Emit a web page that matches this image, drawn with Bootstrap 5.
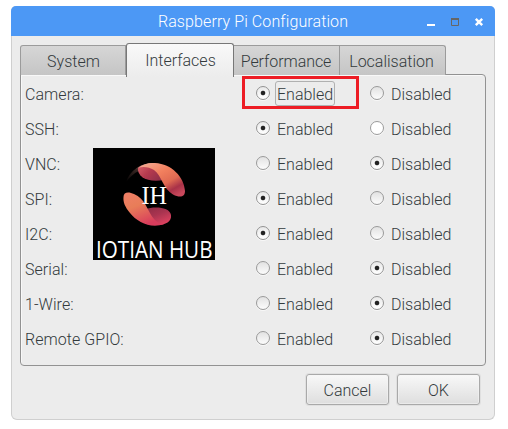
<!DOCTYPE html>
<html lang="en">
<head>
<meta charset="utf-8">
<title>Raspberry Pi Configuration</title>
<link href="https://cdn.jsdelivr.net/npm/bootstrap@5.3.0/dist/css/bootstrap.min.css" rel="stylesheet">
<style>
body{background:#fff;font-family:Roboto,"Liberation Sans",sans-serif;font-weight:300;font-size:16px;line-height:20px;color:#333a3c;overflow:hidden}
.win{width:484px;height:414px;margin:6px 0 0 11px;background:#ececec;border:1px solid #cfcfcf;border-top:0;border-bottom-width:1px;border-radius:5px 5px 6px 6px}
.titlebar{height:30px;margin:0 -1px;background:#4c98f5;color:#fff;border-radius:5px 5px 0 0}
.titletext{padding-top:2px;letter-spacing:.1px}
.winctl{right:11px;top:9px}
.tabs{height:32px;margin:7px 0 0 8px;z-index:1}
.tabs .nav-link{height:30px;padding:3px 0 0;color:#333a3c;background:linear-gradient(#d6d6d6,#c5c5c5);border:1px solid #9b9b9b;border-left-width:0;border-bottom:0;border-radius:0;margin:2px 0 0}
.tabs .nav-link.first{width:106px;padding-left:1px;border-left-width:1px;border-top-left-radius:3px}
.tabs .nav-link.active{width:108px;height:34px;margin:0 0 -2px;padding:0 0 0 1px;background:linear-gradient(#f9f9f9,#ececec);border:1px solid #777;border-bottom:0;border-radius:3px 3px 0 0}
.tabs .nav-link.mid{width:106px;padding-right:1px;letter-spacing:-.06px}
.tabs .nav-link.last{width:106px;padding-right:2px;border-top-right-radius:3px}
.panel{width:466px;height:292px;margin:-1px 0 0 8px;border:1px solid #929292;border-radius:0 4px 4px 4px;box-shadow:inset 1px 1px #f8f8f8;padding:2px 0 0 4px}
.opt{height:35px}
.opt-name{width:231px;letter-spacing:.05px}
.choice{width:114px}
.form-check-input.rb{width:14px;height:14px;margin:0 7px 3px 0;border:1px solid #9a9a9a;background-color:transparent;background-image:linear-gradient(#e2e2e2,#fcfcfc);background-size:auto;box-shadow:0 1px #f8f8f8}
.form-check-input.rb:checked{border-color:#929292;background-color:#f5f5f5;background-image:radial-gradient(circle at 6px 6px,#222 0 1.9px,rgba(34,34,34,0) 2.7px),linear-gradient(#e9e9e9,#fff)}
.form-check-input.rb.plain{background-image:none;background-color:#fff}
.focus-text{outline:1px solid #b0b0b0;outline-offset:1px;border-radius:1px;line-height:19px;padding-top:2px;margin-top:-2px}
.marker{left:242px;top:76px;width:117px;height:33px;border:3px solid #ed1c24}
.logo{left:93px;top:148px;overflow:visible}
.actions{margin:8px 14px 0 0;gap:8px}
.actions .btn{width:83px;height:31px;padding:2px 0 0;font-weight:300;font-size:16px;line-height:20px;color:#333a3c;border:1px solid #a9a9a9;border-radius:3px;background:linear-gradient(#f8f8f8,#dedede);box-shadow:0 0 0 1px #e0e0e0,inset 0 0 0 1px #f5f5f580}
</style>
</head>
<body>
<div class="win">
  <div class="titlebar position-relative d-flex justify-content-center align-items-center">
    <span class="titletext">Raspberry Pi Configuration</span>
    <svg class="winctl position-absolute" width="60" height="14" viewBox="0 0 60 14" fill="none">
      <path d="M3 10h8" stroke="#fff" stroke-width="2"/>
      <path d="M27.5 4v6.5h7V4" stroke="#666"/><path d="M27 4h8" stroke="#666" stroke-width="2"/>
      <path d="M51.8 3.8l6.400 6.400M58.200 3.800l-6.400 6.400" stroke="#fff" stroke-width="2.4"/>
    </svg>
  </div>
  <div class="tabs nav d-flex flex-nowrap position-relative">
    <a class="nav-link first d-flex justify-content-center align-items-center">System</a>
    <a class="nav-link active d-flex justify-content-center align-items-center">Interfaces</a>
    <a class="nav-link mid d-flex justify-content-center align-items-center">Performance</a>
    <a class="nav-link last d-flex justify-content-center align-items-center">Localisation</a>
  </div>
  <div class="panel">
    <div class="opt d-flex align-items-center"><span class="opt-name">Camera:</span><label class="choice d-flex align-items-center"><input class="form-check-input rb" type="radio" name="camera" checked><span class="focus-text">Enabled</span></label><label class="choice d-flex align-items-center"><input class="form-check-input rb" type="radio" name="camera"><span>Disabled</span></label></div>
    <div class="opt d-flex align-items-center"><span class="opt-name">SSH:</span><label class="choice d-flex align-items-center"><input class="form-check-input rb" type="radio" name="ssh" checked><span>Enabled</span></label><label class="choice d-flex align-items-center"><input class="form-check-input rb plain" type="radio" name="ssh"><span>Disabled</span></label></div>
    <div class="opt d-flex align-items-center"><span class="opt-name">VNC:</span><label class="choice d-flex align-items-center"><input class="form-check-input rb" type="radio" name="vnc"><span>Enabled</span></label><label class="choice d-flex align-items-center"><input class="form-check-input rb" type="radio" name="vnc" checked><span>Disabled</span></label></div>
    <div class="opt d-flex align-items-center"><span class="opt-name">SPI:</span><label class="choice d-flex align-items-center"><input class="form-check-input rb" type="radio" name="spi" checked><span>Enabled</span></label><label class="choice d-flex align-items-center"><input class="form-check-input rb" type="radio" name="spi"><span>Disabled</span></label></div>
    <div class="opt d-flex align-items-center"><span class="opt-name">I2C:</span><label class="choice d-flex align-items-center"><input class="form-check-input rb" type="radio" name="i2c" checked><span>Enabled</span></label><label class="choice d-flex align-items-center"><input class="form-check-input rb" type="radio" name="i2c"><span>Disabled</span></label></div>
    <div class="opt d-flex align-items-center"><span class="opt-name">Serial:</span><label class="choice d-flex align-items-center"><input class="form-check-input rb" type="radio" name="serial"><span>Enabled</span></label><label class="choice d-flex align-items-center"><input class="form-check-input rb" type="radio" name="serial" checked><span>Disabled</span></label></div>
    <div class="opt d-flex align-items-center"><span class="opt-name">1-Wire:</span><label class="choice d-flex align-items-center"><input class="form-check-input rb" type="radio" name="wire"><span>Enabled</span></label><label class="choice d-flex align-items-center"><input class="form-check-input rb" type="radio" name="wire" checked><span>Disabled</span></label></div>
    <div class="opt d-flex align-items-center"><span class="opt-name">Remote GPIO:</span><label class="choice d-flex align-items-center"><input class="form-check-input rb" type="radio" name="gpio"><span>Enabled</span></label><label class="choice d-flex align-items-center"><input class="form-check-input rb" type="radio" name="gpio" checked><span>Disabled</span></label></div>
  </div>
  <div class="actions d-flex justify-content-end">
    <button class="btn" type="button">Cancel</button>
    <button class="btn" type="button">OK</button>
  </div>
</div>
<div class="marker position-absolute"></div>
<svg class="logo position-absolute" width="122" height="112" viewBox="0 0 122 112">
  <defs>
    <linearGradient id="a" x1="0" y1="0" x2=".8" y2="1"><stop offset="0" stop-color="#f3b09c"/><stop offset=".4" stop-color="#f2805e"/><stop offset=".66" stop-color="#e06a52"/><stop offset=".84" stop-color="#a93248"/><stop offset="1" stop-color="#c8485c"/></linearGradient>
    <linearGradient id="b" x1="0" y1="0" x2="1" y2=".6"><stop offset="0" stop-color="#d8626a"/><stop offset=".5" stop-color="#b63a4e"/><stop offset="1" stop-color="#92304a"/></linearGradient>
    <linearGradient id="c" x1="0" y1="0" x2=".5" y2="1"><stop offset="0" stop-color="#f07f68"/><stop offset=".45" stop-color="#e87d58"/><stop offset="1" stop-color="#d83c5c"/></linearGradient>
    <linearGradient id="d" x1="0" y1="0" x2=".6" y2="1"><stop offset="0" stop-color="#8e2c44"/><stop offset=".5" stop-color="#a93450"/><stop offset="1" stop-color="#dc4260"/></linearGradient>
    <linearGradient id="e" x1="0" y1="1" x2="1" y2="0"><stop offset="0" stop-color="#000"/><stop offset=".5" stop-color="#392724"/><stop offset="1" stop-color="#f3b09c"/></linearGradient>
  </defs>
  <rect width="122" height="112"/>
  <path d="M33 34C37 22 48 15 61 15L46 23C41 25 37 29 33 34z" fill="url(#e)"/>
  <path d="M45 20C44 29 55 35 71 32L64 18C57 16 49 16 45 20z" fill="url(#b)"/>
  <path d="M45 20C50 16 56 14.500 62 15C79 16 91 29 92 43C92 49 87 50 80 46.500C70 41 69 28 61 22C56 19 50 18 45 20z" fill="url(#a)"/>
  <path d="M52 61C62 58 77 59 78 67C79 74 72 77.500 62 77C56 74 52 66 52 61z" fill="url(#d)"/>
  <path d="M30.500 49C30.500 43.500 36 43.500 41 46C52 51 54 61 59 68.500C62 73 66 76 71 76C58 81 44 74 37 65C32 59 30 54 30.500 49z" fill="url(#c)"/>
  <text x="48.500" y="56" font-family="Liberation Serif,serif" font-weight="400" font-size="26" fill="#fff" textLength="25.500" lengthAdjust="spacingAndGlyphs">IH</text>
  <text x="3" y="109.500" font-family="Open Sans,sans-serif" font-weight="400" font-size="23" fill="#fff" textLength="116.500" lengthAdjust="spacingAndGlyphs">IOTIAN HUB</text>
</svg>
<script src="https://cdn.jsdelivr.net/npm/bootstrap@5.3.0/dist/js/bootstrap.bundle.min.js"></script>
</body>
</html>
